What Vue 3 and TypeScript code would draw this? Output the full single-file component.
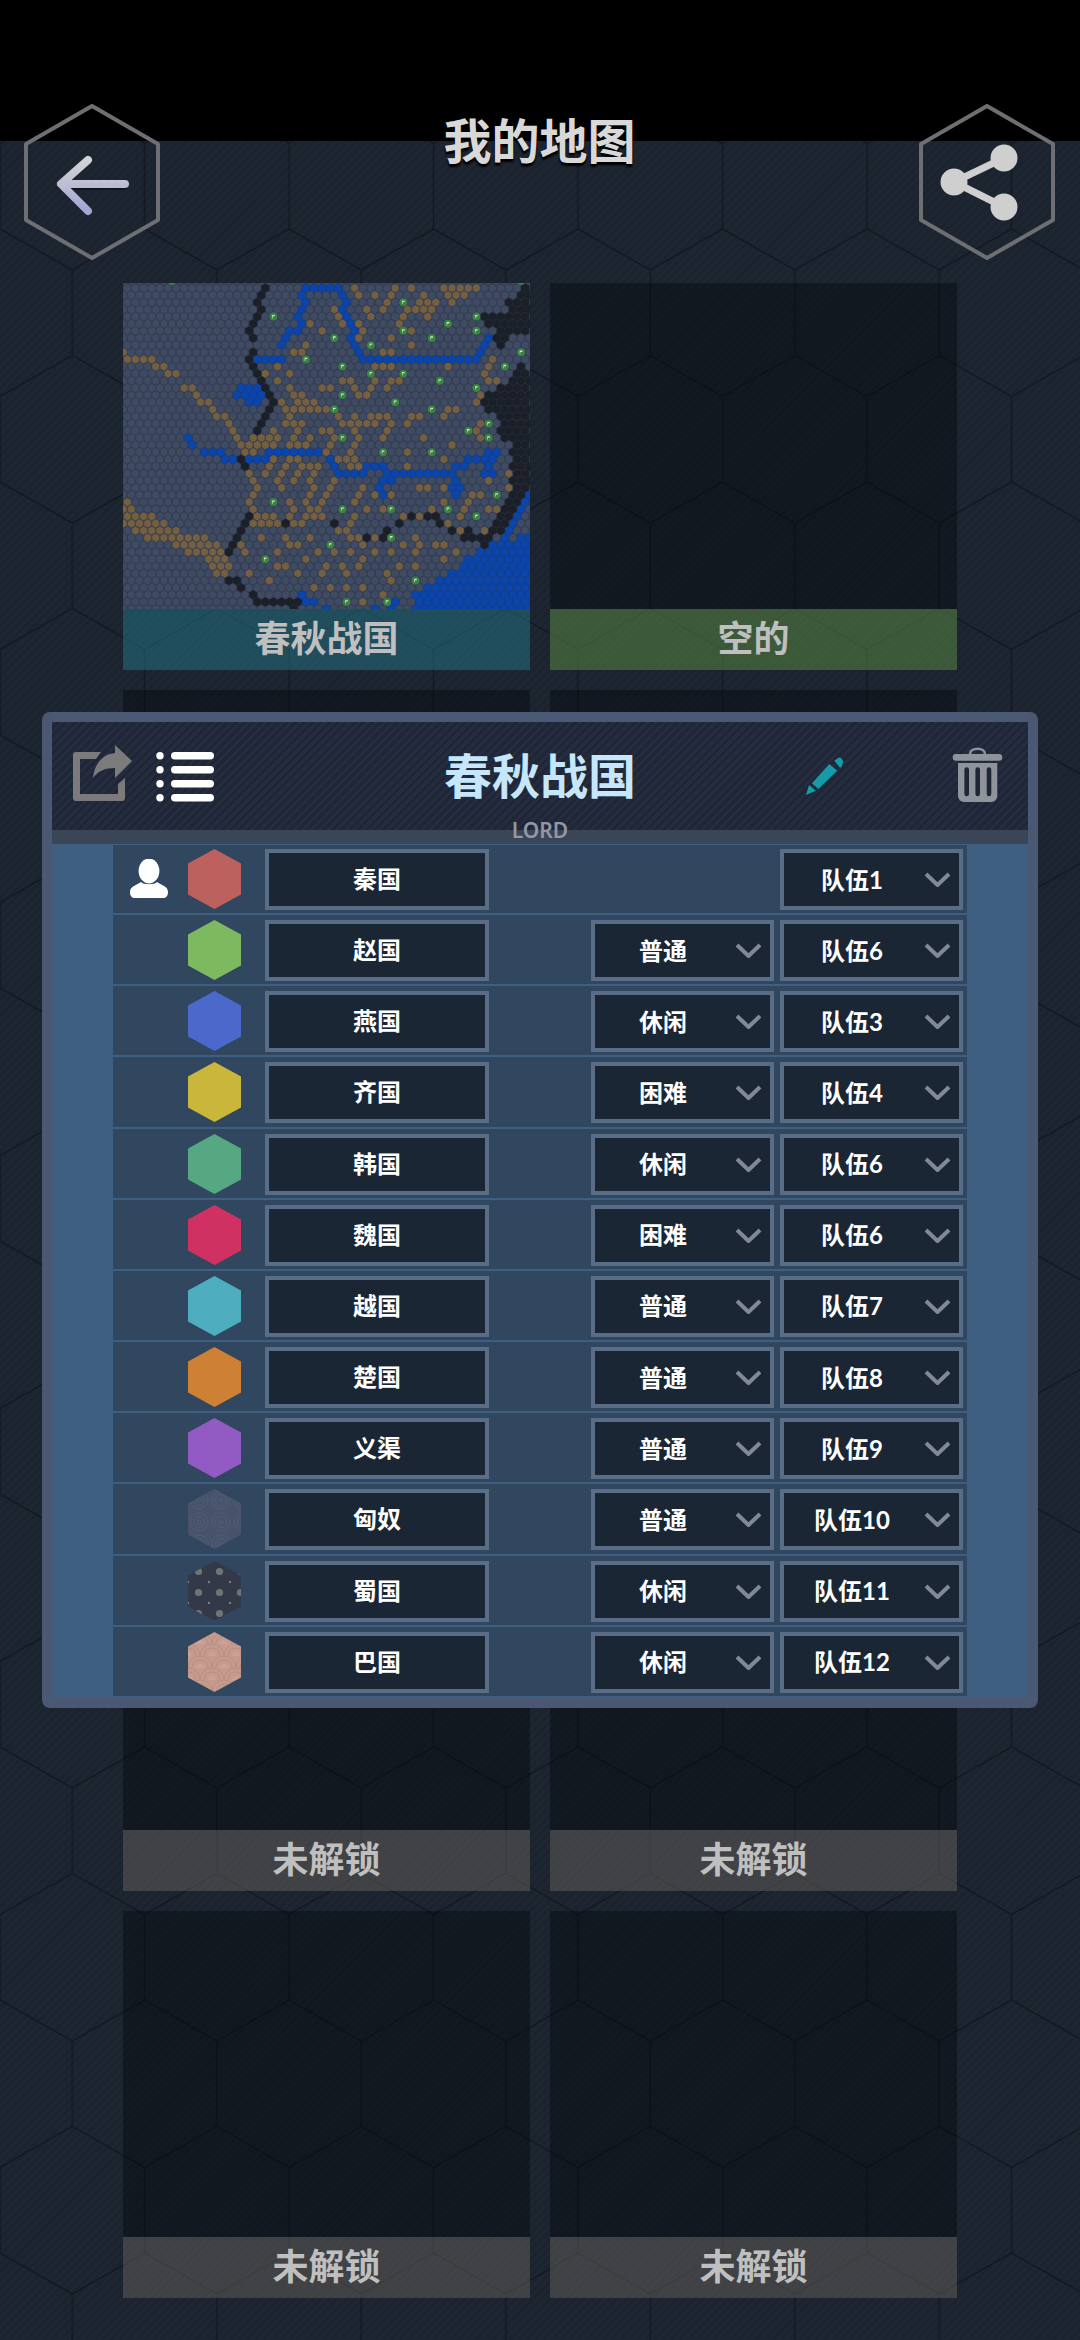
<template>
  <div class="page">
    <svg class="hex-bg" width="1080" height="2340">
      <defs>
        <pattern id="bg-hex" patternUnits="userSpaceOnUse" x="72.3" y="17" width="144.5" height="253">
          <path d="M0 0V85.4L72.25 126.5V212L0 253M144.5 0V85.4L72.25 126.5M72.25 212L144.5 253M0 85.4L-72 126.5" fill="none" stroke="#131923" stroke-width="1.6" />
        </pattern>
      </defs>
      <rect width="1080" height="2340" fill="url(#bg-hex)" />
    </svg>
    <div class="status-strip" />

    <header class="top">
      <button class="hex-btn">
        <svg width="136" height="156" viewBox="0 0 136 156">
          <defs>
            <linearGradient id="arrow-grad" x1="0" y1="0" x2="0" y2="1">
              <stop offset="0" stop-color="#d4d4d6" />
              <stop offset="1" stop-color="#a3a5d2" />
            </linearGradient>
          </defs>
          <polygon class="hex-line" points="68,2 134,40 134,116 68,154 2,116 2,40" />
          <path d="M37 82H101" fill="none" stroke="#000" stroke-opacity=".5" stroke-width="7" stroke-linecap="round" />
          <path d="M64 56L37 80H101M37 80L64 107" fill="none" stroke="url(#arrow-grad)" stroke-width="8" stroke-linecap="round" stroke-linejoin="round" />
        </svg>
      </button>
      <h1 class="page-title">我的地图</h1>
      <button class="hex-btn">
        <svg width="136" height="156" viewBox="0 0 136 156">
          <polygon class="hex-line" points="68,2 134,40 134,116 68,154 2,116 2,40" />
          <path d="M85 54L35 78L85 103" fill="none" stroke="#cfcfcf" stroke-width="7" />
          <circle cx="85" cy="54" r="13.5" fill="#cfcfcf" />
          <circle cx="35" cy="78" r="13.5" fill="#cfcfcf" />
          <circle cx="85" cy="103" r="13.5" fill="#cfcfcf" />
        </svg>
      </button>
    </header>

    <section class="map-grid">
      <article v-for="(slot, i) in slots" :key="i" class="slot">
        <div class="slot-thumb" :class="{ 'slot-thumb--map': slot.map }">
          <svg v-if="slot.map" class="map-svg" width="407" height="326" viewBox="39 39 1221 978" preserveAspectRatio="none">
            <path :d="mapPaths.land" fill="#3f4b62" stroke="#363f53" stroke-width="3" />
            <path :d="mapPaths.brown" fill="#745f41" stroke="#363f53" stroke-width="1.5" />
            <path :d="mapPaths.blue" fill="#0a45ae" stroke="#0a3d98" stroke-width="1" />
            <path :d="mapPaths.black" fill="#1b1f28" stroke="#1b1f28" stroke-width="1" />
            <g v-for="f in mapFlags" :key="f.x + '-' + f.y">
              <circle :cx="f.x" :cy="f.y" r="12" fill="#3a8343" />
              <path :d="`M${f.x - 4} ${f.y - 5}h8v4h-6v6h-2z`" fill="#cfe6cb" />
            </g>
          </svg>
        </div>
        <div class="slot-label" :class="`slot-label--${slot.kind}`">{{ slot.label }}</div>
      </article>
    </section>

    <div class="panel">
      <div class="panel-head">
        <div class="head-side head-side--left">
          <svg width="66" height="62" viewBox="0 0 66 62">
            <path d="M31 10H6a3 3 0 0 0-3 3V56a3 3 0 0 0 3 3H52a3 3 0 0 0 3-3V36L48 42V52H10V17H26Z" fill="#7b7b7b" />
            <path d="M45 3L62 19L45 36V26C35 26 28 29 23 36C24 22 33 12 45 11Z" fill="#7b7b7b" />
          </svg>
          <svg class="ic-list" width="60" height="56" viewBox="0 0 60 56">
            <g v-for="y in [4, 18, 32, 46]" :key="y">
              <circle cx="4" :cy="y + 3.7" r="3.7" fill="#fff" />
              <rect x="15" :y="y" width="43" height="7.4" rx="3.7" fill="#fff" />
            </g>
          </svg>
        </div>
        <h2 class="panel-title">春秋战国</h2>
        <div class="head-side head-side--right">
          <svg width="42" height="42" viewBox="0 0 42 42">
            <path d="M2 40L5 30L12 35.7ZM8 28.3L25.3 9L33.3 15.7L14.3 34ZM30.3 5.7L34.3 2.7Q37 1.6 39.3 6.7L37.7 11.7L36 12.7Z" fill="#159ca6" />
          </svg>
          <svg width="56" height="60" viewBox="0 0 56 60">
            <path d="M20 8C20 1 35 1 35 8" fill="none" stroke="#8f939c" stroke-width="2.6" />
            <rect x="2.7" y="8" width="49.6" height="6.7" rx="3.3" fill="#8f939c" />
            <path d="M8 17H47.3V50a6 6 0 0 1-6 6H14a6 6 0 0 1-6-6Z" fill="#8f939c" />
            <path d="M16.7 23.5V48M27.7 23.5V48M39 23.5V48" stroke="#1f2635" stroke-width="4.6" stroke-linecap="round" />
          </svg>
        </div>
        <span class="panel-mode">LORD</span>
      </div>
      <div class="panel-band" />

      <div class="nation-table">
        <div v-for="n in nations" :key="n.name" class="nation-row">
          <div class="player-slot">
            <svg v-if="n.player" width="40" height="40" viewBox="0 0 40 40">
              <path d="M1 33C1 27 8 26 12 23C14 26 26 26 28 23C32 26 39 27 39 33C39 37 37 39 34 39H6C3 39 1 37 1 33Z" fill="#fff" />
              <ellipse cx="20" cy="12" rx="10.4" ry="12.5" fill="#fff" />
            </svg>
          </div>
          <svg class="swatch" width="53" height="60" viewBox="0 0 53 60">
            <polygon points="26.5,0 53,14.5 53,45.5 26.5,60 0,45.5 0,14.5" :fill="n.color" />
          </svg>
          <div class="name-box">{{ n.name }}</div>
          <div v-if="n.level" class="pick pick--level">
            <span class="pick-text">{{ n.level }}</span>
            <svg class="chev" width="27" height="15" viewBox="0 0 27 15"><path d="M2 2L13.5 13L25 2" /></svg>
          </div>
          <div class="pick">
            <span class="pick-text">{{ n.team }}</span>
            <svg class="chev" width="27" height="15" viewBox="0 0 27 15"><path d="M2 2L13.5 13L25 2" /></svg>
          </div>
        </div>
      </div>
    </div>

    <svg class="swatch-defs" width="0" height="0">
      <defs>
        <pattern id="pat-spiral" patternUnits="userSpaceOnUse" width="22" height="22">
          <rect width="22" height="22" fill="#47536b" />
          <circle cx="11" cy="11" r="9" fill="none" stroke="#525e76" stroke-width=".8" />
          <circle cx="11" cy="11" r="5.5" fill="none" stroke="#525e76" stroke-width=".8" />
          <circle cx="11" cy="11" r="2" fill="none" stroke="#525e76" stroke-width=".8" />
        </pattern>
        <pattern id="pat-dots" patternUnits="userSpaceOnUse" width="21" height="21">
          <rect width="21" height="21" fill="#343949" />
          <circle cx="10.5" cy="10.5" r="3.6" fill="#737373" />
          <circle cx="0" cy="0" r="1.2" fill="#7d7d7d" />
          <circle cx="21" cy="0" r="1.2" fill="#7d7d7d" />
          <circle cx="0" cy="21" r="1.2" fill="#7d7d7d" />
          <circle cx="21" cy="21" r="1.2" fill="#7d7d7d" />
        </pattern>
        <pattern id="pat-scales" patternUnits="userSpaceOnUse" width="24" height="24">
          <rect width="24" height="24" fill="#c69a8c" />
          <path d="M0 12A12 12 0 0 1 24 12M4 12A8 8 0 0 1 20 12M-12 24A12 12 0 0 1 12 24M12 24A12 12 0 0 1 36 24M-8 24A8 8 0 0 1 8 24M16 24A8 8 0 0 1 32 24" fill="none" stroke="#b98f82" stroke-width="1" />
          <path d="M8 12A4 4 0 0 1 16 12ZM-4 24A4 4 0 0 1 4 24ZM20 24A4 4 0 0 1 28 24Z" fill="#cda294" />
        </pattern>
      </defs>
    </svg>
  </div>
</template>

<script setup lang="ts">
type Pt = [number, number]

// the slots in rows 2 and 3 sit fully behind the panel, so their labels stay empty
const slots = [
  { label: '春秋战国', kind: 'teal', map: true },
  { label: '空的', kind: 'green', map: false },
  { label: '', kind: 'lock', map: false },
  { label: '', kind: 'lock', map: false },
  { label: '', kind: 'lock', map: false },
  { label: '', kind: 'lock', map: false },
  { label: '未解锁', kind: 'lock', map: false },
  { label: '未解锁', kind: 'lock', map: false },
  { label: '未解锁', kind: 'lock', map: false },
  { label: '未解锁', kind: 'lock', map: false },
]

const nations = [
  { name: '秦国', color: '#bd615f', level: '', team: '队伍1', player: true },
  { name: '赵国', color: '#7cb95f', level: '普通', team: '队伍6' },
  { name: '燕国', color: '#4a69cb', level: '休闲', team: '队伍3' },
  { name: '齐国', color: '#c9b63a', level: '困难', team: '队伍4' },
  { name: '韩国', color: '#55a882', level: '休闲', team: '队伍6' },
  { name: '魏国', color: '#cf3262', level: '困难', team: '队伍6' },
  { name: '越国', color: '#4eaec0', level: '普通', team: '队伍7' },
  { name: '楚国', color: '#ce8034', level: '普通', team: '队伍8' },
  { name: '义渠', color: '#925bc4', level: '普通', team: '队伍9' },
  { name: '匈奴', color: 'url(#pat-spiral)', level: '普通', team: '队伍10' },
  { name: '蜀国', color: 'url(#pat-dots)', level: '休闲', team: '队伍11' },
  { name: '巴国', color: 'url(#pat-scales)', level: '休闲', team: '队伍12' },
]

// map shapes, traced in thumbnail coordinates and snapped to the hex cells below
const pts = (s: string): Pt[] => s.trim().split(/\s+/).map((p) => p.split(',').map(Number) as Pt)

const brownLines = `
50,245 50,268 125,268 150,290 200,311|220,354 245,354 270,397 295,397 320,440 345,440 370,490 395,525 500,525|490,460 500,525|420,503 490,503|395,546 460,525
740,50 750,75|795,75|860,50 825,120|905,55|940,75 880,140 915,120 975,97 955,140|990,45 1105,45|1020,75 1065,75|1027,97|770,120 785,140|870,160|905,183 905,225|845,204
675,120 695,160|600,160 635,183|755,160 760,183 745,204|820,245 855,245|555,245 595,225
505,290|467,311|540,311|503,333|540,354 555,375 610,397|630,354 670,354|695,333 730,333 750,375 775,375 800,333|790,290 850,290|830,354 845,333 880,333|1015,290|1150,268 1125,311 1150,333|1115,375 1100,397
510,397|555,397 620,397|530,418 660,418 690,440|545,418 520,460 585,460 560,490 540,525 600,525 600,503|635,482 680,503 650,546|690,460 790,460 775,440 840,440 850,460 820,503|735,440 745,500 720,546 750,590 690,568|895,460 910,440 940,440|1003,440 1015,418 1050,418|940,503|1027,525|893,546|1003,568|893,590|1110,460 1100,482 1115,503
490,568 470,611|540,568 505,633 515,655|570,568 590,590 550,633|625,590 600,633 610,660 590,697 600,718|415,611 440,655 418,700 440,740 500,738|440,760 510,760|675,633 650,655 640,697 630,740 540,760|550,738 540,697|760,655 735,697|795,675|770,718|845,675|820,718|930,655 965,655|1003,655|1090,675 1120,675|1090,675 1050,740|965,718 1000,697|1135,718 1170,718|1137,633|1200,611|1200,655|880,740|930,740|1015,760 1050,780|1125,780|735,740 720,770 680,780 720,800 755,802|795,802
455,802|530,802 540,825 570,825|600,802|760,825|880,825|920,802 930,825 920,845|975,825 1015,825|1040,845|1003,868|845,845|795,845|725,845|675,845|625,845|503,845|393,825 405,845|590,868|760,868 745,890|870,890|920,890|650,890 635,910|700,890 710,910|500,890 535,890|565,910|418,910|480,932|830,910 845,932|612,953|660,953|710,953|760,953|820,975|757,995
`.trim().split(/[|\n]/).map(pts)

const brownAreas = [
  '39,685 60,700 80,725 130,725 170,765 240,790 330,815 365,885 345,925 305,915 285,860 220,850 185,825 125,810 70,790 39,770',
].map(pts)

const blueLines = [
  '443,268 515,268 515,225 540,183 565,183 565,140 590,97 578,55 690,55 710,97 700,120 730,183 725,204 757,268 1100,268 1125,225 1137,204',
  '235,503 245,525 285,546 330,546 345,568 380,568',
  '415,568 470,568 480,546 635,546 650,568 665,590 710,611 760,611 775,590 820,590 832,611 1030,611 1045,590 1075,568 1130,568 1137,546 1170,546',
  '1137,568 1125,611 1150,611',
  '820,611 820,680', '805,655 840,630', '1030,611 1040,680', '1055,655',
  '1250,680 1225,725 1200,770 1190,800',
  '578,970 600,995 650,1015', '790,1015', '855,995 845,1015',
].map(pts)

const blueAreas = [
  '390,345 445,345 468,375 445,405 410,405 370,375',
  '1260,790 1260,1025 905,1025 905,965 1005,925 1030,895 1090,855 1140,815 1190,815',
].map(pts)

const blackLines = [
  '470,45 440,95 450,120 430,150 418,185 430,225 418,268 440,310 470,355 490,395 465,435 440,482',
  '393,568 405,590', '418,738 355,845',
  '355,930 395,950 418,970 440,995 565,995 550,1015',
  '527,760', '673,760', '770,802', '820,802 832,780', '868,760', '905,738', '955,738 980,738 992,760', '1027,780',
  '1065,802 1078,780', '1065,802 1125,802 1125,825', '1125,802 1165,780',
].map(pts)

const blackAreas = [
  '1112,125 1190,125 1190,90 1262,35 1262,190 1200,190 1175,240 1150,190 1165,180 1125,165',
  '1230,275 1265,300 1265,665 1235,690 1200,760 1175,795 1150,760 1170,700 1200,680 1200,530 1170,480 1170,440 1125,420 1112,380 1170,350 1190,330',
].map(pts)

const flagSpots = pts(`185,33 1235,33 880,97 490,140 1100,140 1015,161 880,183 1100,183 673,204 966,204 783,225 587,268 1235,247 698,290 1187,290 783,311 880,311 990,333 1100,354 698,375 855,397 673,418 966,418 1137,460 1076,482 698,503 1137,503 820,546 966,546 1162,675 490,697 698,718 845,718 1015,718 1100,740 845,802 660,825 465,868 917,932 710,995 832,995`)

const COL = 24.35
const ROW = 21.4
const cellX = (c: number, r: number) => 880 + COL * c + (Math.abs(r) % 2 === 1 ? COL / 2 : 0)
const cellY = (r: number) => 97 + ROW * r

function nearLine(x: number, y: number, line: Pt[]): boolean {
  if (line.length === 1) return Math.hypot(x - line[0][0], y - line[0][1]) < 14
  for (let i = 0; i < line.length - 1; i++) {
    const [ax, ay] = line[i]
    const [bx, by] = line[i + 1]
    const len = (bx - ax) ** 2 + (by - ay) ** 2
    const t = Math.max(0, Math.min(1, ((x - ax) * (bx - ax) + (y - ay) * (by - ay)) / len))
    if (Math.hypot(x - ax - t * (bx - ax), y - ay - t * (by - ay)) < 11) return true
  }
  return false
}

function inside(x: number, y: number, poly: Pt[]): boolean {
  let hit = false
  for (let i = 0, j = poly.length - 1; i < poly.length; j = i++) {
    const [xi, yi] = poly[i]
    const [xj, yj] = poly[j]
    if (yi > y !== yj > y && x < ((xj - xi) * (y - yi)) / (yj - yi) + xi) hit = !hit
  }
  return hit
}

function buildMap() {
  const out = { land: '', brown: '', blue: '', black: '' }
  const hexR = 13.2
  for (let r = -4; r <= 44; r++) {
    for (let c = -36; c <= 17; c++) {
      const x = cellX(c, r)
      const y = cellY(r)
      let kind: keyof typeof out = 'land'
      if (brownLines.some((l) => nearLine(x, y, l)) || brownAreas.some((p) => inside(x, y, p))) kind = 'brown'
      if (blackAreas.some((p) => inside(x, y, p))) kind = 'black'
      if (blueAreas.some((p) => inside(x, y, p)) || blueLines.some((l) => nearLine(x, y, l))) kind = 'blue'
      if (blackLines.some((l) => nearLine(x, y, l))) kind = 'black'
      const w = hexR * 0.866
      const h = hexR / 2
      const d = `M${x.toFixed(1)} ${(y - hexR).toFixed(1)}l${w} ${h}v${hexR}l${-w} ${h}l${-w} ${-h}v${-hexR}z`
      out[kind] += d
    }
  }
  return out
}

const mapPaths = buildMap()
const mapFlags = flagSpots.map(([x, y]) => {
  const r = Math.round((y - 97) / ROW)
  const c = Math.round((x - cellX(0, r)) / COL)
  return { x: +cellX(c, r).toFixed(1), y: +cellY(r).toFixed(1) }
})
</script>

<style>
body {
  background: #000;
}
</style>

<style scoped>
.page {
  position: relative;
  width: 1080px;
  height: 2340px;
  overflow: hidden;
  padding: 104px 0 0;
  box-sizing: border-box;
  font-family: "Noto Sans CJK SC", "Noto Sans", sans-serif;
  background-color: #1c2430;
  background-image: repeating-linear-gradient(135deg, rgba(255, 255, 255, 0.008) 0 3px, rgba(0, 0, 0, 0.03) 3px 6px);
}

.hex-bg {
  position: absolute;
  left: 0;
  top: 0;
}

.status-strip {
  position: absolute;
  left: 0;
  top: 0;
  width: 100%;
  height: 141px;
  background: #000;
}

.top {
  position: relative;
  display: flex;
  justify-content: space-between;
  align-items: flex-start;
  padding: 0 25px 0 24px;
  height: 156px;
  margin-bottom: 23px;
}

.hex-btn {
  padding: 0;
  border: 0;
  background: none;
  width: 136px;
  height: 156px;
}

.hex-line {
  fill: none;
  stroke: #6e6f72;
  stroke-width: 4;
  stroke-linejoin: round;
}

.page-title {
  margin: -1px 0 0;
  font-size: 48px;
  line-height: 70px;
  font-weight: 700;
  color: #d8d8d8;
  text-shadow: 0 3px 2px #000, 0 1px 1px #000;
}

.map-grid {
  position: relative;
  display: grid;
  grid-template-columns: 407px 407px;
  grid-auto-rows: 387px;
  gap: 20px;
  padding: 0 123px;
}

.slot {
  display: flex;
  flex-direction: column;
}

.slot-thumb {
  flex: 1;
  background: rgba(5, 8, 12, 0.42);
}

.slot-thumb--map {
  background: #363f53;
  overflow: hidden;
}

.map-svg {
  display: block;
}

.slot-label {
  flex: none;
  height: 61px;
  line-height: 55px;
  text-align: center;
  font-size: 36px;
  font-weight: 700;
  color: #bfbfbf;
}

.slot-label--teal {
  background: rgba(38, 120, 136, 0.5);
}

.slot-label--green {
  background: rgba(92, 144, 68, 0.5);
}

.slot-label--lock {
  background: rgba(100, 95, 90, 0.5);
}

.panel {
  position: absolute;
  left: 42px;
  top: 712px;
  width: 996px;
  height: 996px;
  box-sizing: border-box;
  border: 10px solid #4a5873;
  border-radius: 8px;
  display: flex;
  flex-direction: column;
}

.panel-head {
  position: relative;
  height: 108px;
  display: grid;
  grid-template-columns: 1fr auto 1fr;
  align-items: center;
  background-color: #20283a;
  background-image: repeating-linear-gradient(135deg, rgba(255, 255, 255, 0.018) 0 3px, rgba(0, 0, 0, 0.06) 3px 6px);
}

.head-side {
  display: flex;
  align-items: flex-start;
  padding-left: 18px;
  gap: 19px;
}

.head-side--left {
  align-self: start;
  padding-top: 20px;
}

.head-side--right {
  align-items: center;
  justify-content: flex-end;
  padding: 0 22px 0 0;
  gap: 104px;
}

.ic-list {
  margin-left: 1px;
  margin-top: 6px;
}

.panel-title {
  margin: -6px 0 0;
  font-size: 48px;
  line-height: 60px;
  font-weight: 700;
  color: #c5e6fb;
}

.panel-mode {
  position: absolute;
  left: 0;
  right: 0;
  bottom: -10px;
  text-align: center;
  font: 600 21px/20px "Noto Sans", sans-serif;
  color: #9397a3;
}

.panel-band {
  height: 14px;
  background: #3a4558;
}

.nation-table {
  flex: 1;
  display: grid;
  grid-auto-rows: 1fr;
  background: #3f5f80;
  padding: 0 61px;
}

.nation-row {
  display: flex;
  align-items: flex-start;
  box-sizing: border-box;
  padding: 5px 4px 0 0;
  background: #30475f;
  border-bottom: 2px solid #3d5f80;
}

.nation-row:first-child {
  box-shadow: inset 0 1px 0 #3d5f80;
}

.player-slot {
  width: 75px;
  height: 60px;
  display: flex;
  align-items: center;
  padding-left: 16px;
  box-sizing: border-box;
}

.swatch {
  flex: none;
}

.name-box,
.pick {
  height: 61px;
  box-sizing: border-box;
  border: 4px solid #596d86;
  background: #1a2633;
  color: #fff;
  font-size: 24px;
  font-weight: 700;
}

.name-box {
  width: 224px;
  margin-left: 24px;
  line-height: 49px;
  text-align: center;
  margin-right: auto;
}

.pick {
  width: 183px;
  display: flex;
  align-items: center;
  margin-left: 6px;
  font-family: Lato, "Noto Sans CJK SC", sans-serif;
}

.pick-text {
  flex: 1;
  text-align: center;
  padding: 0 4px 3px 0;
}

.chev {
  margin-right: 8px;
  flex: none;
  fill: none;
  stroke: #7f8a96;
  stroke-width: 4;
}

.swatch-defs {
  position: absolute;
}
</style>
